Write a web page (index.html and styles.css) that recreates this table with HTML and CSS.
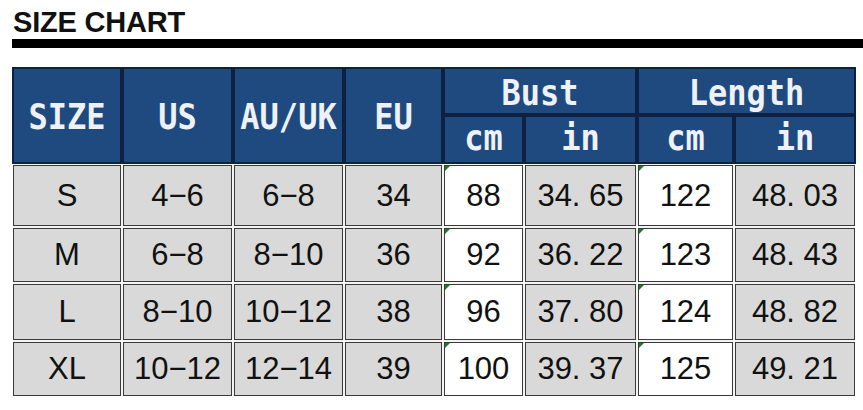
FILE: index.html
```html
<!DOCTYPE html>
<html lang="en">
<head>
<meta charset="utf-8">
<title>Size Chart</title>
<link rel="stylesheet" href="styles.css">
</head>
<body>
<div class="page">
  <h1 class="title">SIZE CHART</h1>
  <div class="rule"></div>
  <div class="chart">
    <div class="hd tall"><span class="lbl">SIZE</span></div>
    <div class="hd tall"><span class="lbl">US</span></div>
    <div class="hd tall"><span class="lbl">AU/UK</span></div>
    <div class="hd tall"><span class="lbl">EU</span></div>
    <div class="hd wide"><span class="lbl">Bust</span></div>
    <div class="hd wide"><span class="lbl">Length</span></div>
    <div class="hd sub"><span class="lbl">cm</span></div>
    <div class="hd sub"><span class="lbl">in</span></div>
    <div class="hd sub"><span class="lbl">cm</span></div>
    <div class="hd sub"><span class="lbl">in</span></div>

    <div class="cell">S</div><div class="cell">4−6</div><div class="cell">6−8</div><div class="cell">34</div>
    <div class="cell white">88</div><div class="cell">34. 65</div><div class="cell white">122</div><div class="cell">48. 03</div>

    <div class="cell">M</div><div class="cell">6−8</div><div class="cell">8−10</div><div class="cell">36</div>
    <div class="cell white">92</div><div class="cell">36. 22</div><div class="cell white">123</div><div class="cell">48. 43</div>

    <div class="cell">L</div><div class="cell">8−10</div><div class="cell">10−12</div><div class="cell">38</div>
    <div class="cell white">96</div><div class="cell">37. 80</div><div class="cell white">124</div><div class="cell">48. 82</div>

    <div class="cell">XL</div><div class="cell">10−12</div><div class="cell">12−14</div><div class="cell">39</div>
    <div class="cell white">100</div><div class="cell">39. 37</div><div class="cell white">125</div><div class="cell">49. 21</div>
  </div>
</div>
</body>
</html>
```

FILE: styles.css
```css
html, body {
  margin: 0;
  padding: 0;
  background: #ffffff;
}

.page {
  padding: 8px 0 0 13px;
}

.title {
  margin: 0;
  font-family: "Liberation Sans", Arial, sans-serif;
  font-weight: bold;
  font-size: 29px;
  line-height: 29px;
  height: 29px;
  color: #111111;
  letter-spacing: -0.2px;
}

.rule {
  margin: 2px 0 0 -1px;
  height: 9px;
  background: #000000;
}

.chart {
  margin-top: 20px;
  display: grid;
  grid-template-columns: 108px 109px 109px 97px 79px 111px 95px 120px;
  grid-template-rows: 46px 47px 61px 54px 56px 54px;
  gap: 2px;
  width: 842px;
  background: #f4f4f4;
}

.hd {
  background: #1f4a80;
  border: 1px solid #0f2142;
  outline: 1px solid #0f2142;
  color: #eef2f8;
  font-family: "DejaVu Sans Mono", monospace;
  font-weight: bold;
  font-size: 32px;
  display: flex;
  align-items: center;
  justify-content: center;
}

.lbl {
  display: inline-block;
  transform: scaleY(1.1);
}

.tall {
  grid-row: span 2;
  padding-top: 2px;
}

.wide {
  grid-column: span 2;
  padding-top: 4px;
}

.sub {
  padding-bottom: 4px;
}

.cell {
  position: relative;
  background: #d9d9d9;
  border: 1px solid #3a3a3a;
  color: #111111;
  font-family: "Liberation Sans", Arial, sans-serif;
  font-size: 31px;
  display: flex;
  align-items: center;
  justify-content: center;
}

.white {
  background: #ffffff;
}

.white::before {
  content: "";
  position: absolute;
  left: 0;
  top: 0;
  width: 0;
  height: 0;
  border-top: 5px solid #1d7a2a;
  border-right: 5px solid transparent;
}
```
